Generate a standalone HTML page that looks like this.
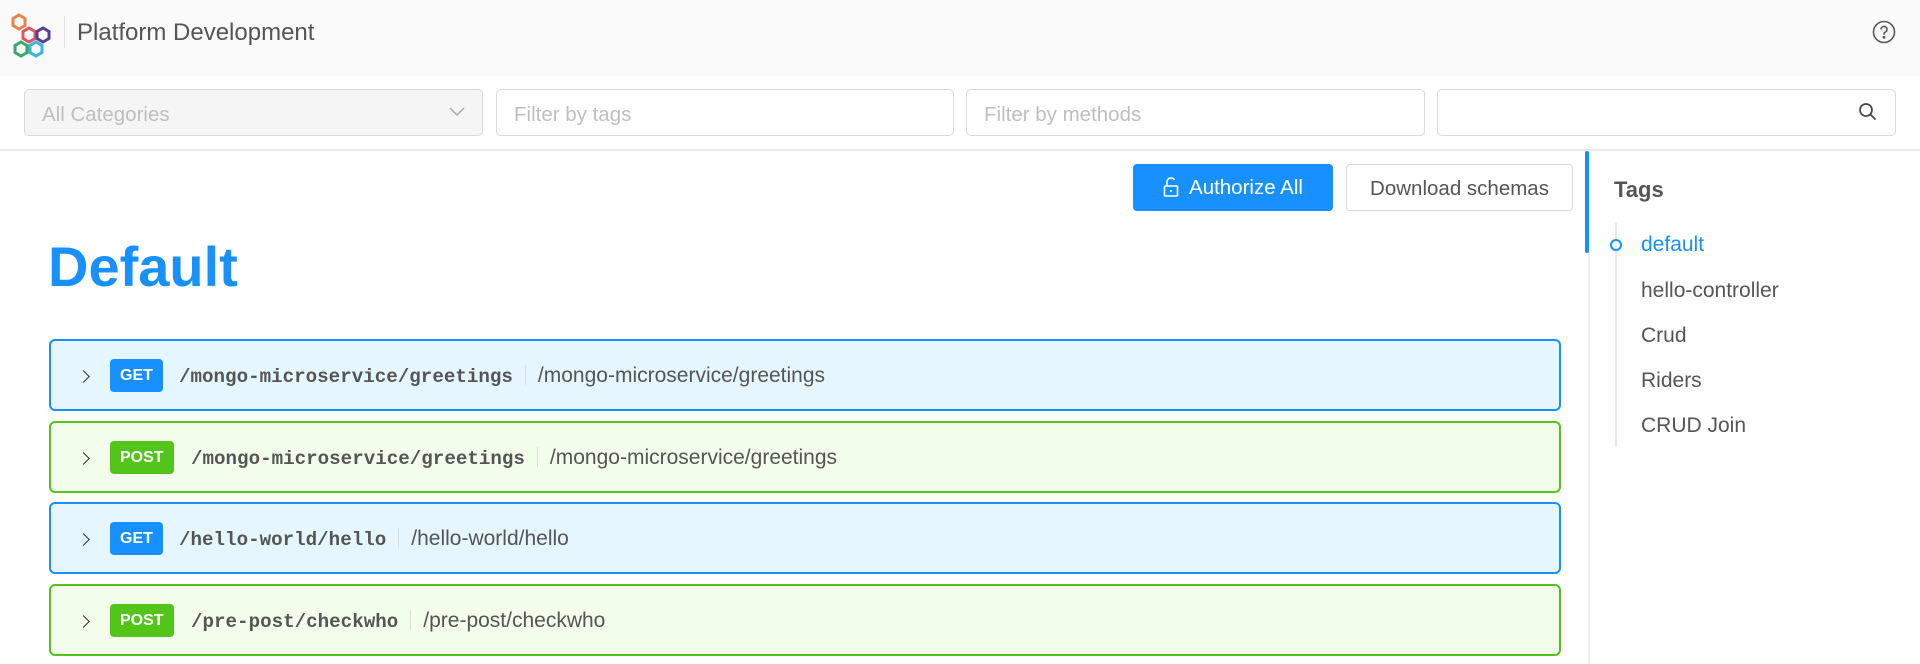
<!DOCTYPE html>
<html><head><meta charset="utf-8"><style>
*{box-sizing:border-box;margin:0;padding:0}
body{width:1920px;height:664px;overflow:hidden;background:#fff;font-family:"Liberation Sans",sans-serif;color:#555;position:relative}
.hdr{position:absolute;left:0;top:0;width:1920px;height:76px;background:#fafafa}
.title{position:absolute;left:77px;top:19px;font-size:24px;color:#555}
.vdiv{position:absolute;left:64px;top:16px;width:1px;height:32px;background:#e0e0e0}
.inp{position:absolute;top:89px;height:47px;border:1.5px solid #d9d9d9;border-radius:5px;font-size:20.5px;color:#bfbfbf;padding:13px 17px;background:#fff}
.hline{position:absolute;left:0;top:149px;width:1920px;height:1.5px;background:#e8e8e8}
.btn{position:absolute;top:164px;height:47px;border-radius:4px;font-size:20.5px;padding-top:12px;text-align:center}
.def{position:absolute;left:48px;top:234px;font-size:56px;font-weight:bold;color:#1890ff}
.op{position:absolute;left:49px;width:1512px;height:72px;border:2px solid;border-radius:6px}
.get{background:#e6f6fe;border-color:#1890ff}
.post{background:#f3fdeb;border-color:#52c41a}
.chev{position:absolute;left:28px;top:31px;width:9px;height:9px;border-right:1.8px solid #333;border-top:1.8px solid #333;transform:rotate(45deg)}
.badge{position:absolute;left:59px;top:18px;height:33px;border-radius:4px;color:#fff;font-weight:bold;font-size:16px;padding:8px 10px;}
.path{position:absolute;top:23px;font-family:"Liberation Mono",monospace;font-weight:bold;font-size:19.2px;color:#555;white-space:nowrap}
.sep{display:inline-block;width:1px;height:20px;background:#e0e0e0;margin:0 12px;vertical-align:-3px}
.desc{font-family:"Liberation Sans",sans-serif;font-weight:normal;font-size:21px}
.side{position:absolute;left:1588px;top:150px;width:1.5px;height:514px;background:#eee}
.tag{position:absolute;left:1641px;font-size:21px;color:#555}
</style></head><body>
<div class="hdr">
<svg style="position:absolute;left:11px;top:13px" width="44" height="46" viewBox="0 0 44 46" fill="none" stroke-width="3">
<polygon points="8,2 14,5.5 14,12.5 8,16 2,12.5 2,5.5" stroke="#e8854a"/>
<polygon points="18,15 24,18.5 24,25.5 18,29 12,25.5 12,18.5" stroke="#e0555f"/>
<polygon points="32,15 38,18.5 38,25.5 32,29 26,25.5 26,18.5" stroke="#5b3f8e"/>
<polygon points="10,29 16,32.5 16,39.5 10,43 4,39.5 4,32.5" stroke="#3aa86b"/>
<polygon points="25,29 31,32.5 31,39.5 25,43 19,39.5 19,32.5" stroke="#3bb4e0"/>
</svg>
<div class="vdiv"></div>
<div class="title">Platform Development</div>
<svg style="position:absolute;left:1872px;top:20px" width="24" height="24" viewBox="0 0 24 24" fill="none" stroke="#555" stroke-width="1.6"><circle cx="12" cy="12" r="10.5"/><path d="M9 9.5a3 3 0 1 1 4.2 2.7c-.8.4-1.2 1-1.2 1.8v.8"/><circle cx="12" cy="17.3" r=".6" fill="#555"/></svg>
</div>
<div class="inp" style="left:24px;width:459px;background:#f5f5f5">All Categories
<svg style="position:absolute;right:17px;top:17px" width="16" height="10" viewBox="0 0 16 10" fill="none" stroke="#aaa" stroke-width="1.5"><path d="M1 1l7 7 7-7"/></svg></div>
<div class="inp" style="left:496px;width:458px">Filter by tags</div>
<div class="inp" style="left:966px;width:459px">Filter by methods</div>
<div class="inp" style="left:1437px;width:459px">
<svg style="position:absolute;right:17px;top:12px" width="20" height="20" viewBox="0 0 20 20" fill="none" stroke="#444" stroke-width="1.7"><circle cx="8" cy="8" r="6"/><path d="M12.5 12.5l5 5"/></svg></div>
<div class="hline"></div>
<div class="btn" style="left:1133px;width:200px;background:#1890ff;color:#fff">
<svg style="vertical-align:-3px;margin-right:10px" width="16" height="20" viewBox="0 0 16 20" fill="none" stroke="#fff" stroke-width="1.6"><path d="M4 9V5a4 4 0 0 1 7.5-2"/><rect x="1.5" y="9" width="13" height="10" rx="1"/><path d="M8 13v2"/></svg>Authorize All</div>
<div class="btn" style="left:1346px;width:227px;border:1.5px solid #d9d9d9;color:#555">Download schemas</div>
<div class="def">Default</div>
<div class="op get" style="top:339px"><div class="chev"></div><div class="badge" style="background:#1890ff">GET</div><div class="path" style="left:128px">/mongo-microservice/greetings<span class="sep"></span><span class="desc">/mongo-microservice/greetings</span></div></div>
<div class="op post" style="top:421px"><div class="chev"></div><div class="badge" style="background:#52c41a">POST</div><div class="path" style="left:140px">/mongo-microservice/greetings<span class="sep"></span><span class="desc">/mongo-microservice/greetings</span></div></div>
<div class="op get" style="top:502px"><div class="chev"></div><div class="badge" style="background:#1890ff">GET</div><div class="path" style="left:128px">/hello-world/hello<span class="sep"></span><span class="desc">/hello-world/hello</span></div></div>
<div class="op post" style="top:584px"><div class="chev"></div><div class="badge" style="background:#52c41a">POST</div><div class="path" style="left:140px">/pre-post/checkwho<span class="sep"></span><span class="desc">/pre-post/checkwho</span></div></div>
<div class="side"></div>
<div style="position:absolute;left:1585px;top:151px;width:4px;height:102px;background:#1890ff;border-radius:2px"></div>
<div style="position:absolute;left:1614px;top:177px;font-size:22px;font-weight:bold;color:#555">Tags</div>
<div style="position:absolute;left:1615px;top:223px;width:2px;height:224px;background:#e8e8e8"></div>
<div style="position:absolute;left:1610px;top:239px;width:12px;height:12px;border:2.5px solid #1890ff;border-radius:50%;background:#fff"></div>
<div class="tag" style="top:233px;color:#1890ff">default</div>
<div class="tag" style="top:279px">hello-controller</div>
<div class="tag" style="top:324px">Crud</div>
<div class="tag" style="top:369px">Riders</div>
<div class="tag" style="top:414px">CRUD Join</div>
</body></html>
